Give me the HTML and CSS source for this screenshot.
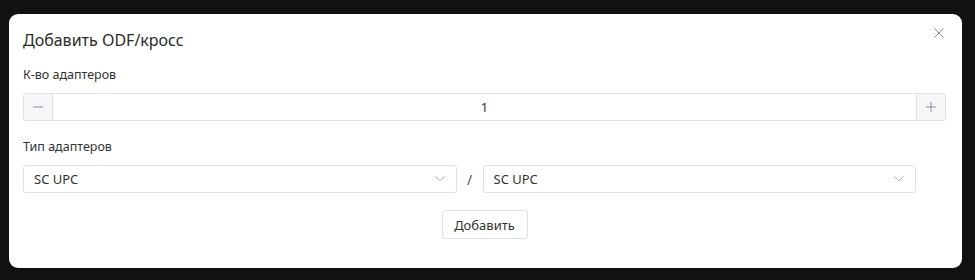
FILE: index.html
```html
<!DOCTYPE html>
<html lang="ru">
<head>
    <meta charset="UTF-8">
    <title>Добавить ODF/кросс</title>
    <link rel="stylesheet" href="styles.css">
</head>
<body>

<div id="modal">
    <div class="modal-head">
        <h2>Добавить ODF/кросс</h2>
        <span class="close">
            <svg width="10" height="10" viewBox="0 0 10 10"><path d="M0.5 0.5L9.5 9.5M9.5 0.5L0.5 9.5" stroke="#8a8f98" stroke-width="1"/></svg>
        </span>
    </div>

    <div class="field">
        <label>К-во адаптеров</label>
        <div class="counter">
            <span class="step">
                <svg width="12" height="12" viewBox="0 0 12 12"><path d="M1 6H11" stroke="#8a8f98" stroke-width="1"/></svg>
            </span>
            <span class="value">1</span>
            <span class="step">
                <svg width="12" height="12" viewBox="0 0 12 12"><path d="M1 6H11M6 1V11" stroke="#8a8f98" stroke-width="1"/></svg>
            </span>
        </div>
    </div>

    <div class="field">
        <label>Тип адаптеров</label>
        <div class="types">
            <div class="select">
                <span>SC UPC</span>
                <svg width="10" height="6" viewBox="0 0 10 6"><path d="M0.5 0.5L5 5L9.5 0.5" stroke="#b0b4ba" stroke-width="1" fill="none"/></svg>
            </div>
            <span class="slash">/</span>
            <div class="select">
                <span>SC UPC</span>
                <svg width="10" height="6" viewBox="0 0 10 6"><path d="M0.5 0.5L5 5L9.5 0.5" stroke="#b0b4ba" stroke-width="1" fill="none"/></svg>
            </div>
        </div>
    </div>

    <div class="actions">
        <button class="btn">Добавить</button>
    </div>
</div>

</body>
</html>
```

FILE: styles.css
```css
*{
    margin: 0;
    padding: 0;
    box-sizing: border-box;
}
body{
    background: #111111;
    font-family: "Noto Sans", "Open Sans", sans-serif;
    color: #333333;
    padding: 14px 13px 12px 9px;
}

#modal{
    background: #ffffff;
    border-radius: 9px;
    height: 254px;
    padding: 16px 16px 0 14px;
}
.modal-head{
    display: flex;
    justify-content: space-between;
    align-items: flex-start;
    height: 36px;
}
.modal-head h2{
    font-size: 16px;
    font-weight: 400;
    line-height: 20px;
    color: #2b2b2b;
}
.modal-head .close{
    display: flex;
    margin-right: 2px;
    position: relative;
    top: -2px;
}

.field{
    margin-bottom: 17px;
}
.field label{
    display: block;
    font-size: 12.5px;
    line-height: 18px;
    margin-bottom: 9px;
    color: #333;
}

.counter{
    display: flex;
    height: 28px;
    border: 1px solid #e0e2e5;
    border-radius: 3px;
    overflow: hidden;
}
.counter .step{
    width: 29px;
    background: #f5f6f8;
    display: flex;
    align-items: center;
    justify-content: center;
}
.counter .step:first-child{
    border-right: 1px solid #e0e2e5;
}
.counter .step:last-child{
    border-left: 1px solid #e0e2e5;
}
.counter .value{
    flex: 1;
    text-align: center;
    font-size: 13px;
    line-height: 26px;
}

.types{
    display: flex;
    align-items: center;
    padding-right: 30px;
}
.select{
    flex: 1;
    height: 28px;
    border: 1px solid #e0e2e5;
    border-radius: 3px;
    display: flex;
    align-items: center;
    justify-content: space-between;
    padding: 0 11px 0 10px;
    font-size: 13px;
}
.slash{
    width: 26px;
    text-align: center;
    font-size: 14px;
    color: #555;
}

.actions{
    display: flex;
    justify-content: center;
}
.btn{
    font-family: inherit;
    font-size: 13px;
    color: #333;
    background: #fff;
    border: 1px solid #e0e2e5;
    border-radius: 3px;
    height: 29px;
    width: 86px;
}
```
